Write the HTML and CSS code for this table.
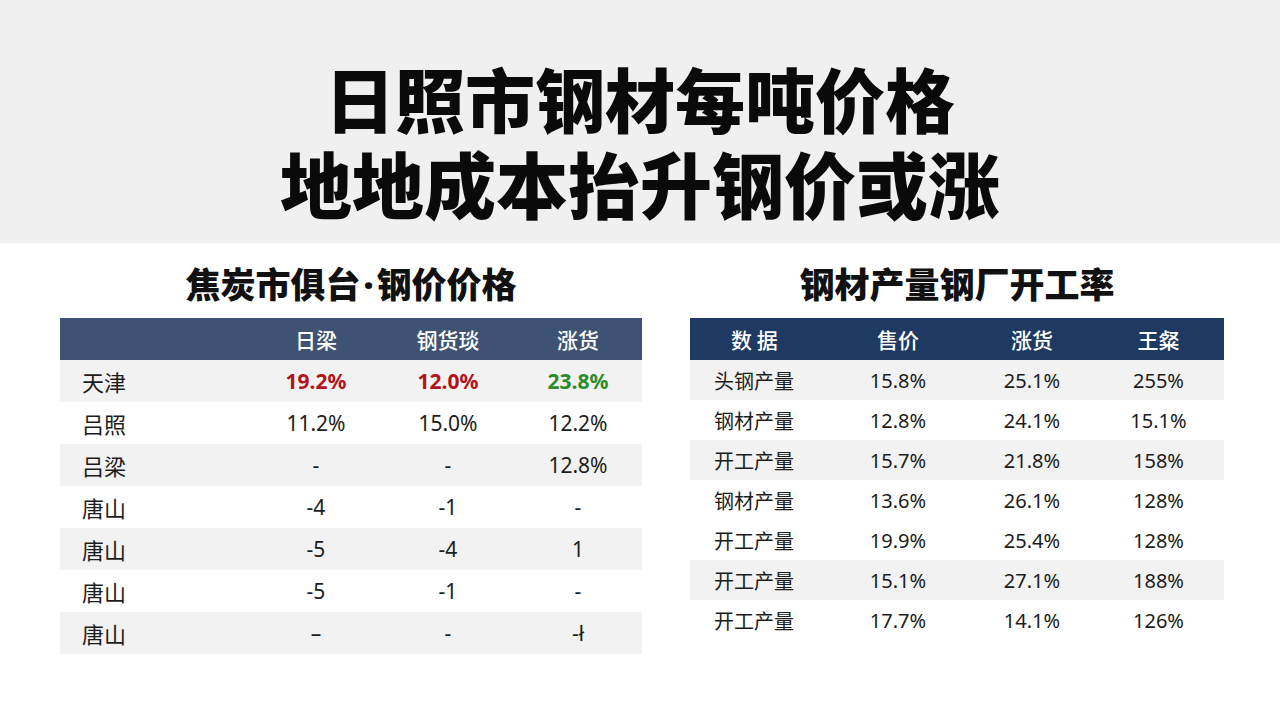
FILE: index.html
```html
<!DOCTYPE html>
<html lang="zh">
<head>
<meta charset="utf-8">
<link rel="stylesheet" href="styles.css">
</head>
<body>
<header class="band">
  <h1 class="title"><span class="l1">日照市钢材每吨价格</span><span class="l2">地地成本抬升钢价或涨</span></h1>
</header>
<main class="main">
  <section class="panel left">
    <h2 class="sub">焦炭市俱台<span class="dot">·</span>钢价价格</h2>
    <div class="tbl tl">
      <div class="row head"><span class="c lab"></span><span class="c">日梁</span><span class="c">钢货琰</span><span class="c">涨货</span></div>
      <div class="row g"><span class="c lab">天津</span><span class="c red">19.2%</span><span class="c red">12.0%</span><span class="c green">23.8%</span></div>
      <div class="row"><span class="c lab">吕照</span><span class="c">11.2%</span><span class="c">15.0%</span><span class="c">12.2%</span></div>
      <div class="row g"><span class="c lab">吕梁</span><span class="c">-</span><span class="c">-</span><span class="c">12.8%</span></div>
      <div class="row"><span class="c lab">唐山</span><span class="c">-4</span><span class="c">-1</span><span class="c">-</span></div>
      <div class="row g"><span class="c lab">唐山</span><span class="c">-5</span><span class="c">-4</span><span class="c">1</span></div>
      <div class="row"><span class="c lab">唐山</span><span class="c">-5</span><span class="c">-1</span><span class="c">-</span></div>
      <div class="row g"><span class="c lab">唐山</span><span class="c">–</span><span class="c">-</span><span class="c">-ł</span></div>
    </div>
  </section>
  <section class="panel right">
    <h2 class="sub">钢材产量钢厂开工率</h2>
    <div class="tbl tr">
      <div class="row head"><span class="c lab hl">数 据</span><span class="c">售价</span><span class="c">涨货</span><span class="c">王粲</span></div>
      <div class="row g"><span class="c lab">头钢产量</span><span class="c">15.8%</span><span class="c">25.1%</span><span class="c">255%</span></div>
      <div class="row"><span class="c lab">钢材产量</span><span class="c">12.8%</span><span class="c">24.1%</span><span class="c">15.1%</span></div>
      <div class="row g"><span class="c lab">开工产量</span><span class="c">15.7%</span><span class="c">21.8%</span><span class="c">158%</span></div>
      <div class="row"><span class="c lab">钢材产量</span><span class="c">13.6%</span><span class="c">26.1%</span><span class="c">128%</span></div>
      <div class="row"><span class="c lab">开工产量</span><span class="c">19.9%</span><span class="c">25.4%</span><span class="c">128%</span></div>
      <div class="row g"><span class="c lab">开工产量</span><span class="c">15.1%</span><span class="c">27.1%</span><span class="c">188%</span></div>
      <div class="row"><span class="c lab">开工产量</span><span class="c">17.7%</span><span class="c">14.1%</span><span class="c">126%</span></div>
    </div>
  </section>
</main>
</body>
</html>
```
FILE: styles.css
```css
* { box-sizing: border-box; margin: 0; padding: 0; }
html, body { width: 1280px; height: 720px; overflow: hidden; }
body {
  background: #ffffff;
  font-family: "Noto Sans", "Noto Sans CJK SC", sans-serif;
  color: #1c1c1c;
}
.band {
  height: 243px;
  background: #f0f0f0;
  padding-top: 56px;
}
.title {
  display: flex;
  flex-direction: column;
  align-items: center;
  font-family: "Noto Sans CJK SC", sans-serif;
  font-weight: 900;
  color: #0a0a0a;
}
.title .l1 { font-size: 70px; line-height: 84px; }
.title .l2 { font-size: 72px; line-height: 84px; }
.main {
  display: flex;
  gap: 48px;
  padding: 18px 56px 0 60px;
}
.panel { display: flex; flex-direction: column; }
.left { width: 582px; }
.right { width: 534px; }
.sub {
  font-family: "Noto Sans CJK SC", sans-serif;
  font-weight: 900;
  font-size: 35px;
  line-height: 44px;
  height: 44px;
  text-align: center;
  color: #111;
  margin-bottom: 13px;
}
.sub .dot { font-family: "Noto Sans", sans-serif; font-weight: 900; margin: 0 3px; line-height: 1; }
.row {
  display: grid;
  align-items: center;
}
.tl .row { grid-template-columns: 190px 132px 132px 128px; height: 42px; font-size: 21px; }
.tr .row { grid-template-columns: 141px 134px 134px 125px; height: 40px; font-size: 20px; }
.tr .row .c:last-child { padding-right: 6px; }
.row.g { background: #f2f2f2; }
.c { text-align: center; white-space: nowrap; }
.lab { text-align: left; font-family: "Noto Sans CJK SC", sans-serif; }
.tl .lab { padding-left: 22px; font-size: 22px; }
.tr .lab { padding-left: 24px; }
.head { color: #fff; font-family: "Noto Sans CJK SC", sans-serif; font-weight: 500; }
.tl .head { background: #3e5373; height: 42px; font-size: 21px; }
.tr .head { background: #1f3a62; height: 42px; font-size: 21px; }
.tr .head .hl { padding-left: 41px; }
.red { color: #b3141c; font-weight: 700; }
.green { color: #2b8c2b; font-weight: 700; }
```
